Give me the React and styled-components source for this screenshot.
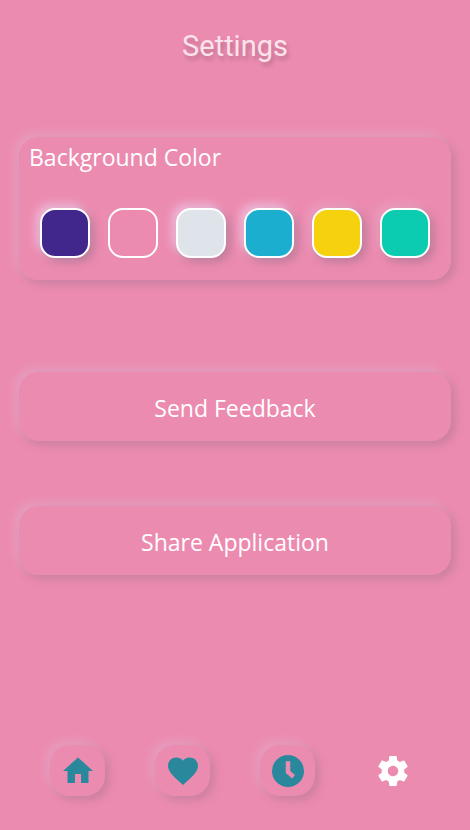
import React, { useState } from "react";
import styled, { createGlobalStyle } from "styled-components";

const PINK = "#ec8bb0";

const GlobalStyle = createGlobalStyle`
  *, *::before, *::after { box-sizing: border-box; }
  body {
    margin: 0;
    background: ${PINK};
    color: #fff;
    font-family: "Open Sans", "Noto Sans", sans-serif;
  }
`;

const Screen = styled.div`
  display: flex;
  flex-direction: column;
  min-height: 100vh;
  padding: 28px 19px 34px;
`;

const Title = styled.h1`
  margin: 0 0 72px;
  font-family: Roboto, sans-serif;
  font-size: 29px;
  font-weight: 400;
  line-height: 37px;
  text-align: center;
  color: #fbe3ec;
  text-shadow: 2px 4px 4px rgba(0, 0, 0, 0.2);
`;

const raised = `
  border: 0;
  border-radius: 20px;
  background: ${PINK};
  box-shadow: 4px 4px 10px rgba(90, 90, 110, 0.24),
    -4px -4px 10px rgba(224, 185, 212, 0.45);
`;

const ColorCard = styled.fieldset`
  ${raised}
  min-width: 0;
  margin: 0 0 92px;
  padding: 4px 10px 22px;
`;

const CardTitle = styled.legend`
  float: left;
  width: 100%;
  margin-bottom: 35px;
  padding: 0;
  font-size: 23px;
  line-height: 32px;
`;

const Swatches = styled.div`
  clear: both;
  display: flex;
  justify-content: center;
  gap: 18px;
`;

const Swatch = styled.input`
  appearance: none;
  width: 50px;
  height: 50px;
  margin: 0;
  border: 2px solid #fff;
  border-radius: 15px;
  background: ${(p) => p.$color};
  box-shadow: 4px 4px 10px rgba(90, 90, 110, 0.32),
    -4px -4px 10px ${(p) => p.$glow};
  cursor: pointer;

  &:checked {
    box-shadow: inset 0 0 10px rgba(245, 135, 175, 0.5);
  }
`;

const Actions = styled.div`
  display: flex;
  flex-direction: column;
  gap: 65px;
`;

const ActionButton = styled.button`
  ${raised}
  height: 69px;
  padding: 2px 0 0;
  color: #fff;
  font-family: inherit;
  font-size: 23px;
  line-height: 32px;
  cursor: pointer;
`;

const Nav = styled.nav`
  display: flex;
  justify-content: center;
  gap: 50px;
  margin-top: auto;
`;

const NavButton = styled.button`
  ${raised}
  display: grid;
  place-items: center;
  width: 55px;
  height: 51px;
  padding: 0;
  color: ${(p) => (p.$active ? "#fff" : "#29889c")};
  ${(p) => p.$active && "box-shadow: none;"}
  cursor: pointer;
`;

const Icon = styled.svg`
  display: block;
  width: 36px;
  height: 36px;
  fill: currentColor;
`;

const STRONG = "rgba(240, 205, 235, 0.75)";
const SOFT = "rgba(235, 185, 212, 0.45)";

const colors = [
  { name: "Purple", value: "#41278b", glow: STRONG },
  { name: "Pink", value: PINK, glow: SOFT },
  { name: "Light gray", value: "#dfe4ea", glow: STRONG },
  { name: "Blue", value: "#1caecf", glow: STRONG },
  { name: "Yellow", value: "#f6d10d", glow: SOFT },
  { name: "Green", value: "#0bccb0", glow: SOFT },
];

const tabs = [
  { name: "Home", path: <path d="M10 20v-6h4v6h5v-8h3L12 3 2 12h3v8z" /> },
  {
    name: "Favorites",
    path: (
      <path d="M12 21.35l-1.45-1.32C5.4 15.36 2 12.28 2 8.5 2 5.42 4.42 3 7.5 3c1.74 0 3.41.81 4.5 2.09C13.09 3.81 14.76 3 16.5 3 19.58 3 22 5.42 22 8.5c0 3.78-3.4 6.86-8.55 11.54z" />
    ),
  },
  {
    name: "History",
    path: (
      <>
        <circle cx="12" cy="12" r="10.67" />
        <path
          d="M12 5.5v7.2l3.7 3.1"
          fill="none"
          stroke={PINK}
          strokeWidth="3"
        />
      </>
    ),
  },
  {
    name: "Settings",
    path: (
      <path d="M19.43 12.98c.04-.32.07-.64.07-.98s-.03-.66-.07-.98l2.11-1.65c.19-.15.24-.42.12-.64l-2-3.46c-.12-.22-.39-.3-.61-.22l-2.49 1c-.52-.4-1.08-.73-1.69-.98l-.38-2.65C14.46 2.18 14.25 2 14 2h-4c-.25 0-.46.18-.49.42l-.38 2.65c-.61.25-1.17.59-1.69.98l-2.49-1c-.23-.09-.49 0-.61.22l-2 3.46c-.13.22-.07.49.12.64l2.11 1.65c-.04.32-.07.65-.07.98s.03.66.07.98l-2.11 1.65c-.19.15-.24.42-.12.64l2 3.46c.12.22.39.3.61.22l2.49-1c.52.4 1.08.73 1.69.98l.38 2.65c.03.24.24.42.49.42h4c.25 0 .46-.18.49-.42l.38-2.65c.61-.25 1.17-.59 1.69-.98l2.49 1c.23.09.49 0 .61-.22l2-3.46c.12-.22.07-.49-.12-.64l-2.11-1.65zM12 15.5c-1.93 0-3.5-1.57-3.5-3.5s1.57-3.5 3.5-3.5 3.5 1.57 3.5 3.5-1.57 3.5-3.5 3.5z" />
    ),
  },
];

export default function App() {
  const [color, setColor] = useState("Pink");
  const [tab, setTab] = useState("Settings");

  return (
    <>
      <GlobalStyle />
      <Screen>
        <Title>Settings</Title>
        <ColorCard>
          <CardTitle>Background Color</CardTitle>
          <Swatches>
            {colors.map((c) => (
              <Swatch
                key={c.name}
                type="radio"
                name="background"
                aria-label={c.name}
                checked={color === c.name}
                onChange={() => setColor(c.name)}
                $color={c.value}
                $glow={c.glow}
              />
            ))}
          </Swatches>
        </ColorCard>
        <Actions>
          <ActionButton type="button">Send Feedback</ActionButton>
          <ActionButton type="button">Share Application</ActionButton>
        </Actions>
        <Nav>
          {tabs.map((t) => (
            <NavButton
              key={t.name}
              type="button"
              aria-label={t.name}
              $active={tab === t.name}
              onClick={() => setTab(t.name)}
            >
              <Icon viewBox="0 0 24 24" aria-hidden="true">
                {t.path}
              </Icon>
            </NavButton>
          ))}
        </Nav>
      </Screen>
    </>
  );
}
